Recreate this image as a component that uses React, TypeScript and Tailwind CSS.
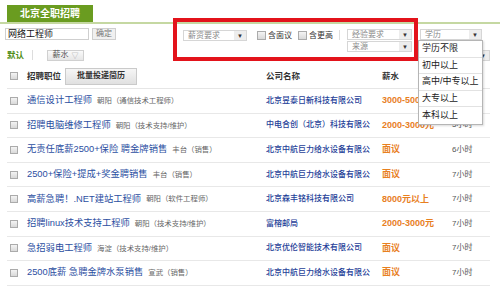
const jobs = [
  { title: "通信设计工程师", area: "朝阳（通信技术工程师）", company: "北京昱泰日新科技有限公司", pay: "3000-5000元", time: "4小时" },
  { title: "招聘电脑维修工程师", area: "朝阳（技术支持/维护）", company: "中电合创（北京）科技有限公", pay: "2000-3000元", time: "5小时" },
  { title: "无责任底薪2500+保险 聘金牌销售", area: "丰台（销售）", company: "北京中航巨力给水设备有限公", pay: "面议", time: "6小时" },
  { title: "2500+保险+提成+奖金聘销售", area: "丰台（销售）", company: "北京中航巨力给水设备有限公", pay: "面议", time: "7小时" },
  { title: "高薪急聘！.NET建站工程师", area: "朝阳（软件工程师）", company: "北京森丰铭科技有限公司", pay: "8000元以上", time: "7小时" },
  { title: "招聘linux技术支持工程师", area: "朝阳（技术支持/维护）", company: "富榕邮局", pay: "2000-3000元", time: "7小时" },
  { title: "急招弱电工程师", area: "海淀（技术支持/维护）", company: "北京优伦智能技术有限公司", pay: "面议", time: "7小时" },
  { title: "2500底薪 急聘金牌水泵销售", area: "宣武（销售）", company: "北京中航巨力给水设备有限公", pay: "面议", time: "7小时" },
];

const degrees = ["学历不限", "初中以上", "高中/中专以上", "大专以上", "本科以上"];

function Check({ className = "" }: { className?: string }) {
  return (
    <span
      className={
        "inline-block shrink-0 border border-[#ababab] bg-gradient-to-b from-[#f4f4f4] to-[#d9d9d9] " + className
      }
    />
  );
}

function Select({ label, className = "" }: { label: string; className?: string }) {
  return (
    <div className={"flex h-[11px] items-center border border-[#d6d6d6] bg-white " + className}>
      <span className="flex-1 whitespace-nowrap pl-[4px] text-[8px] leading-none text-[#8a8a8a]">{label}</span>
      <span className="flex h-full w-[12px] items-center justify-center bg-[#ededed] text-[6px] leading-none text-[#333]">
        ▼
      </span>
    </div>
  );
}

export default function App() {
  return (
    <div className="relative h-[286px] w-[500px] overflow-hidden bg-white [font-family:'Liberation_Sans','Noto_Sans_CJK_SC',sans-serif]">
      {/* 标签 */}
      <div className="border-b-2 border-[#c5d8a2] pl-[7px] pt-[5px]">
        <div className="flex h-[17px] w-[86px] items-center justify-center bg-[#6a9c20] text-[10px] font-bold text-white">
          北京全职招聘
        </div>
      </div>

      {/* 搜索与筛选 */}
      <div className="flex h-[40px] pl-[5px]">
        <div className="w-[178px] pt-[4px]">
          <div className="flex h-[12px] items-center">
            <div className="flex h-full w-[84px] items-center border border-[#cfcfcf] pl-[2px] text-[9px] leading-none text-[#111]">
              网络工程师
            </div>
            <div className="ml-[3px] flex h-full w-[24px] items-center justify-center border border-[#cfcfcf] bg-[#f0f0f0] text-[8px] leading-none text-[#777]">
              确定
            </div>
          </div>
          <div className="mt-[10px] flex h-[10px] items-center">
            <span className="ml-[2px] text-[8.5px] font-bold leading-none text-[#4f8d14]">默认</span>
            <span className="ml-[8px] h-[10px] w-px bg-[#dddddd]" />
            <div className="ml-[14px] flex h-[11px] w-[37px] items-center justify-center gap-[3px] border border-[#d0d0d0] bg-gradient-to-b from-[#fafafa] to-[#e6e6e6] text-[8px] leading-none text-[#555]">
              薪水<span className="text-[7px] text-[#999]">▽</span>
            </div>
          </div>
        </div>

        <div className="flex items-start pt-[5px]">
          <Select label="薪资要求" className="mt-[1px] w-[64px]" />
          <label className="ml-[10px] mt-[1px] flex h-[11px] w-[35px] items-center gap-[2px] whitespace-nowrap">
            <Check className="h-[9px] w-[9px]" />
            <span className="text-[8px] leading-none text-[#333]">含面议</span>
          </label>
          <label className="ml-[6px] mt-[1px] flex h-[11px] w-[35px] items-center gap-[2px] whitespace-nowrap">
            <Check className="h-[9px] w-[9px]" />
            <span className="text-[8px] leading-none text-[#333]">含更高</span>
          </label>
          <span className="ml-[6px] mt-[1px] h-[10px] w-px bg-[#dddddd]" />
          <div className="ml-[7px] flex w-[65px] flex-col gap-[1px]">
            <Select label="经验要求" />
            <Select label="来源" />
          </div>
          <div className="relative ml-[8px] flex w-[70px] flex-col">
            <Select label="学历" className="w-[62px]" />
            <Select label="" className="mt-[10px] w-[40px] self-end" />
            <div className="absolute left-[-2px] top-[11px] z-10 w-[65px] border border-[#b5b5b5] bg-white shadow-[1px_1px_2px_rgba(0,0,0,0.15)]">
              {degrees.map((d, i) => (
                <div
                  key={d}
                  className={
                    "flex h-[16.5px] items-center whitespace-nowrap pl-[3px] text-[9px] leading-none text-[#222] " +
                    (i < degrees.length - 1 ? "border-b border-[#e2e2e2]" : "")
                  }
                >
                  {d}
                </div>
              ))}
            </div>
          </div>
        </div>
      </div>

      {/* 职位列表 */}
      <div className="mx-[7px] w-[483px]">
        <div className="grid h-[25px] grid-cols-[259px_116px_1fr] items-center border-b border-[#e6e6e6]">
          <div className="flex items-center pl-[3px]">
            <Check className="h-[8px] w-[8px]" />
            <span className="ml-[9px] text-[8.5px] font-bold leading-none text-[#333]">招聘职位</span>
            <span className="ml-[4px] flex h-[17px] items-center border border-[#cacaca] bg-gradient-to-b from-[#f6f6f6] to-[#e0e0e0] px-[11px] text-[8px] font-bold leading-none text-[#333]">
              批量投递简历
            </span>
          </div>
          <span className="text-[8.5px] font-bold leading-none text-[#333]">公司名称</span>
          <span className="text-[8.5px] font-bold leading-none text-[#333]">薪水</span>
        </div>

        {jobs.map((j, i) => (
          <div
            key={i}
            className="grid h-[24.6px] grid-cols-[259px_116px_70px_1fr] items-center border-b border-[#e8e8e8]"
          >
            <div className="flex items-center whitespace-nowrap pl-[3px]">
              <Check className="h-[8px] w-[8px]" />
              <span className="ml-[9px] text-[9.3px] leading-none text-[#2b4ea1]">{j.title}</span>
              <span className="ml-[5px] text-[7.4px] leading-none text-[#666]">{j.area}</span>
            </div>
            <span className="whitespace-nowrap text-[8px] font-medium leading-none text-[#1f3f99]">{j.company}</span>
            <span className="whitespace-nowrap text-[9px] font-bold leading-none text-[#e8801f]">{j.pay}</span>
            <span className="text-[8px] leading-none text-[#555]">{j.time}</span>
          </div>
        ))}
      </div>

      {/* 红框标注 */}
      <div className="pointer-events-none absolute left-[173px] top-[18px] z-20 h-[43px] w-[245px] border-[4px] border-[#e3131b]" />
    </div>
  );
}
